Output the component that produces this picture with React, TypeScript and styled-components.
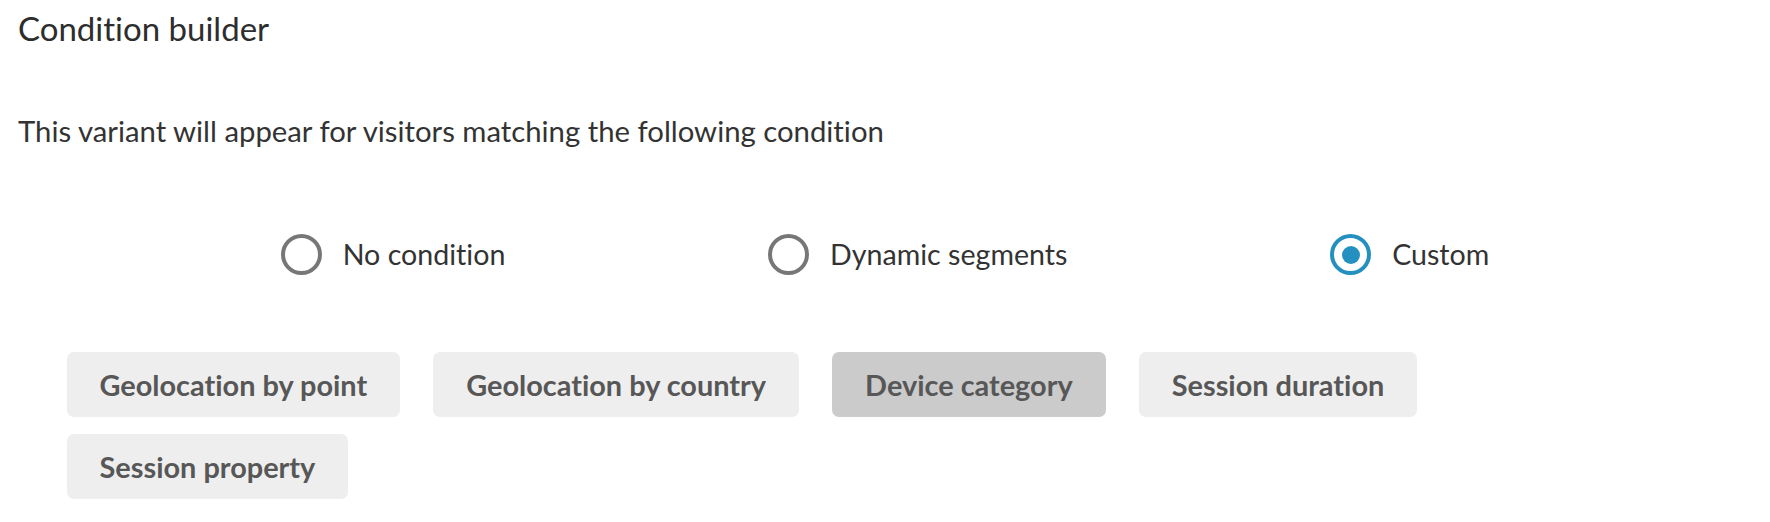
import React, { useState } from "react";
import styled, { createGlobalStyle } from "styled-components";

const GlobalStyle = createGlobalStyle`
  html, body {
    margin: 0;
    padding: 0;
    background: #ffffff;
  }
  body {
    font-family: Lato, "Open Sans", "Noto Sans", sans-serif;
    font-variant-ligatures: none;
    color: #333333;
  }
`;

const Page = styled.div`
  padding: 10px 18px 0 18px;
  width: 1770px;
  box-sizing: border-box;
`;

const Title = styled.h2`
  margin: 0;
  font-size: 33px;
  line-height: 36px;
  font-weight: 400;
  color: #2d2d2d;
`;

const Description = styled.p`
  margin: 69px 0 0 0;
  font-size: 29.3px;
  line-height: 31px;
  font-weight: 400;
  color: #333333;
`;

const RadioGroup = styled.div`
  margin-top: 88px;
  display: flex;
  justify-content: space-evenly;
  align-items: center;
`;

const RadioOption = styled.label`
  display: flex;
  align-items: center;
  gap: 21px;
  cursor: pointer;
  font-size: 28.6px;
  line-height: 31px;
  color: #333333;
`;

const RadioCircle = styled.span<{ $checked: boolean }>`
  width: 41px;
  height: 41px;
  box-sizing: border-box;
  border-radius: 50%;
  border: 4.5px solid ${(p) => (p.$checked ? "#2490bf" : "#777777")};
  display: flex;
  align-items: center;
  justify-content: center;
  flex-shrink: 0;
`;

const RadioDot = styled.span`
  width: 18px;
  height: 18px;
  border-radius: 50%;
  background: #2490bf;
`;

const ChipArea = styled.div`
  margin-top: 68px;
  margin-left: 32px;
  width: 1600px;
  display: flex;
  flex-wrap: wrap;
`;

const Chip = styled.button<{ $active: boolean }>`
  margin: 8.5px 16.5px;
  padding: 17px 33px;
  border: none;
  border-radius: 7px;
  background: ${(p) => (p.$active ? "#cbcbcb" : "#eeeeee")};
  color: #575757;
  font-family: Lato, "Open Sans", "Noto Sans", sans-serif;
  font-variant-ligatures: none;
  font-size: 28.9px;
  line-height: 31px;
  font-weight: 700;
  cursor: pointer;
`;

const options = ["No condition", "Dynamic segments", "Custom"];
const chips = [
  "Geolocation by point",
  "Geolocation by country",
  "Device category",
  "Session duration",
  "Session property",
];

export default function App() {
  const [selected, setSelected] = useState("Custom");
  const [activeChip, setActiveChip] = useState("Device category");
  return (
    <>
      <GlobalStyle />
      <Page>
        <Title>Condition builder</Title>
        <Description>
          This variant will appear for visitors matching the following condition
        </Description>
        <RadioGroup>
          {options.map((o) => (
            <RadioOption key={o} onClick={() => setSelected(o)}>
              <RadioCircle $checked={selected === o}>
                {selected === o && <RadioDot />}
              </RadioCircle>
              {o}
            </RadioOption>
          ))}
        </RadioGroup>
        <ChipArea>
          {chips.map((c) => (
            <Chip key={c} $active={activeChip === c} onClick={() => setActiveChip(c)}>
              {c}
            </Chip>
          ))}
        </ChipArea>
      </Page>
    </>
  );
}
